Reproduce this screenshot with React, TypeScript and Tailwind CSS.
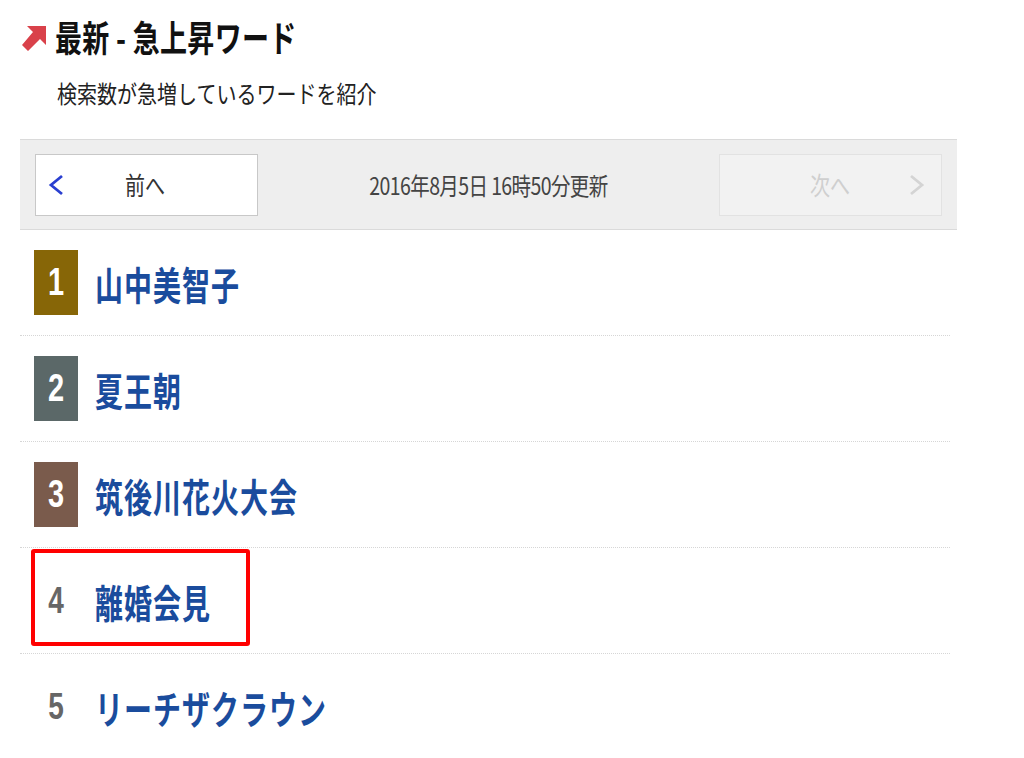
const JP = "font-['Noto_Sans_CJK_JP','Noto_Sans',sans-serif]";

type Word = { rank: number; text: string; badge?: string };

const words: Word[] = [
  { rank: 1, text: "山中美智子", badge: "bg-[#876607]" },
  { rank: 2, text: "夏王朝", badge: "bg-[#5b6868]" },
  { rank: 3, text: "筑後川花火大会", badge: "bg-[#7a5b4c]" },
  { rank: 4, text: "離婚会見" },
  { rank: 5, text: "リーチザクラウン" },
];

const UpArrow = () => (
  <svg width="24" height="25" viewBox="0 0 24 25">
    <polygon points="5,0 24,0 24,19 18,13 6,25 0,19 11,6" fill="#d9414a" />
  </svg>
);

const Row = ({ w, last }: { w: Word; last: boolean }) => (
  <div
    className={`relative flex h-[106px] items-center pl-[14px] ${
      last ? "" : "border-b border-dotted border-[#d6d6d6]"
    }`}
  >
    {w.badge ? (
      <div className={`flex h-[65px] w-[44px] items-center justify-center ${w.badge}`}>
        <span className="inline-block scale-y-[1.35] text-[29px] font-bold text-white font-['Liberation_Sans',sans-serif]">
          {w.rank}
        </span>
      </div>
    ) : (
      <div className="flex h-[65px] w-[44px] items-center justify-center">
        <span className="inline-block scale-y-[1.35] text-[28px] font-bold text-[#666] font-['Liberation_Sans',sans-serif]">
          {w.rank}
        </span>
      </div>
    )}
    <span
      className={`ml-[17px] inline-block scale-y-[1.4] text-[28px] font-bold tracking-[1px] text-[#1a4c9d] ${JP}`}
    >
      {w.text}
    </span>
    {w.rank === 4 && (
      <div className="absolute left-[11px] top-[1px] h-[97px] w-[219px] rounded-[3px] border-4 border-[#ff0000]" />
    )}
  </div>
);

export default function App() {
  return (
    <div className={`min-h-[758px] w-[1024px] bg-white ${JP}`}>
      <div className="ml-[20px] w-[937px] pt-[18px]">
        {/* header */}
        <div className="flex h-[38px] items-center">
          <div className="ml-[2px] mt-[2px]">
            <UpArrow />
          </div>
          <h2 className="ml-[9px] inline-block scale-y-[1.35] text-[27px] font-bold tracking-[0.3px] text-[#111]">
            最新 - 急上昇ワード
          </h2>
        </div>
        <p className="ml-[37px] mt-[22px] inline-block scale-y-[1.22] text-[20px] text-[#222]">
          検索数が急増しているワードを紹介
        </p>

        {/* nav bar */}
        <div className="mt-[31px] flex h-[91px] items-center justify-between border-y border-[#dadada] bg-[#eeeeee] px-[15px]">
          <button className="flex h-[62px] w-[223px] items-center border border-[#c8c8c8] bg-white pl-[11px]">
            <svg width="18" height="24" viewBox="0 0 18 24">
              <polyline points="15,3 4,12 15,21" fill="none" stroke="#2a3fd0" strokeWidth="2.8" />
            </svg>
            <span className="ml-[60px] inline-block scale-y-[1.25] text-[20px] text-[#333]">前へ</span>
          </button>
          <span className="inline-block scale-y-[1.25] text-[19.5px] tracking-[-0.6px] text-[#444]">
            2016年8月5日 16時50分更新
          </span>
          <button className="flex h-[62px] w-[223px] items-center border border-[#e2e2e2] bg-[#f2f2f2] pl-[90px]">
            <span className="inline-block scale-y-[1.25] text-[20px] text-[#cfcfcf]">次へ</span>
            <svg className="ml-[58px]" width="18" height="24" viewBox="0 0 18 24">
              <polyline points="3,3 14,12 3,21" fill="none" stroke="#d4d4d4" strokeWidth="2.8" />
            </svg>
          </button>
        </div>

        {/* ranking */}
        <div className="w-[930px]">
          {words.map((w, i) => (
            <Row key={w.rank} w={w} last={i === words.length - 1} />
          ))}
        </div>
      </div>
    </div>
  );
}
